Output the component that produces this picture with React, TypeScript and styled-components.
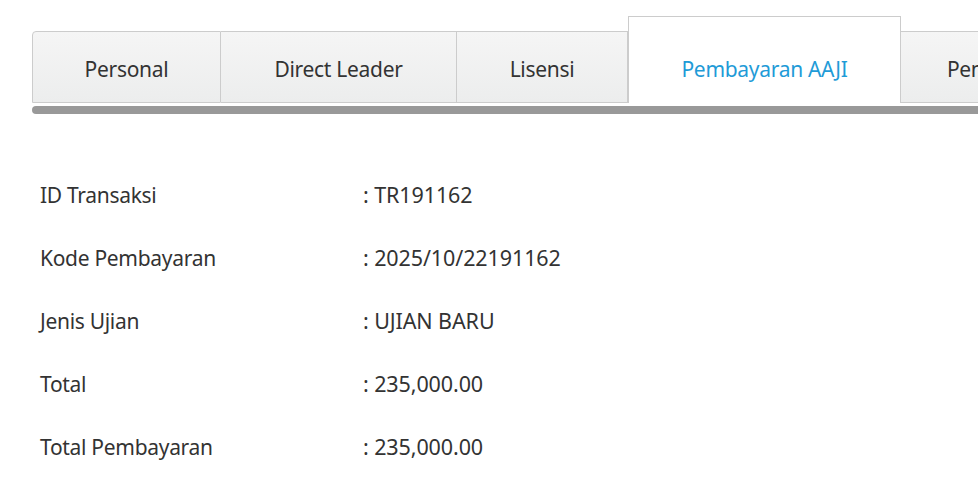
import * as React from 'react';
import styled, { createGlobalStyle } from 'styled-components';

const GlobalStyle = createGlobalStyle`
  body {
    margin: 0;
    background: #ffffff;
    font-family: 'Noto Sans', 'Open Sans', sans-serif;
    color: #333333;
  }
`;

const Page = styled.div`
  width: 978px;
  height: 496px;
  overflow: hidden;
  padding: 16px 0 0 32px;
  box-sizing: border-box;
`;

const TabBar = styled.div`
  display: flex;
  align-items: flex-end;
  width: 1100px;
`;

const Tab = styled.div<{ $active?: boolean; $first?: boolean; $w: number }>`
  flex: 0 0 ${(p) => p.$w}px;
  box-sizing: border-box;
  height: ${(p) => (p.$active ? 87 : 72)}px;
  display: flex;
  align-items: center;
  justify-content: center;
  padding-top: ${(p) => (p.$active ? 18 : 3)}px;
  font-size: 21px;
  letter-spacing: -0.3px;
  white-space: nowrap;
  color: ${(p) => (p.$active ? '#1f9bd7' : '#333333')};
  background: ${(p) =>
    p.$active ? '#ffffff' : 'linear-gradient(to bottom, #f5f5f5, #eceded)'};
  border: 1px solid #cccccc;
  border-bottom: ${(p) => (p.$active ? 'none' : '1px solid #cccccc')};
  border-left: ${(p) => (p.$first || p.$active ? '1px solid #cccccc' : 'none')};
  border-radius: ${(p) => (p.$first ? '4px 0 0 0' : '0')};
`;

const Bar = styled.div`
  margin-top: 3px;
  height: 8px;
  width: 980px;
  background: #999999;
  border-radius: 4px 0 0 4px;
`;

const Details = styled.div`
  padding: 66px 0 0 8px;
  display: flex;
  flex-direction: column;
`;

const Row = styled.div`
  display: flex;
  height: 63px;
  align-items: baseline;
  color: #333333;
`;

const Label = styled.div`
  width: 323px;
  font-size: 21px;
  letter-spacing: -0.3px;
`;

const Value = styled.div`
  font-size: 21.5px;
  letter-spacing: -0.1px;
`;

const tabs = [
  { label: 'Personal', w: 189 },
  { label: 'Direct Leader', w: 236 },
  { label: 'Lisensi', w: 171 },
  { label: 'Pembayaran AAJI', w: 273, active: true },
  { label: 'Pendidikan', w: 200 },
];

const rows = [
  ['ID Transaksi', 'TR191162'],
  ['Kode Pembayaran', '2025/10/22191162'],
  ['Jenis Ujian', 'UJIAN BARU'],
  ['Total', '235,000.00'],
  ['Total Pembayaran', '235,000.00'],
];

const App: React.FC = () => {
  return (
    <Page>
      <GlobalStyle />
      <TabBar>
        {tabs.map((t, i) => (
          <Tab key={t.label} $w={t.w} $active={t.active} $first={i === 0}>
            {t.label}
          </Tab>
        ))}
      </TabBar>
      <Bar />
      <Details>
        {rows.map(([label, value]) => (
          <Row key={label}>
            <Label>{label}</Label>
            <Value>: {value}</Value>
          </Row>
        ))}
      </Details>
    </Page>
  );
};

export default App;
